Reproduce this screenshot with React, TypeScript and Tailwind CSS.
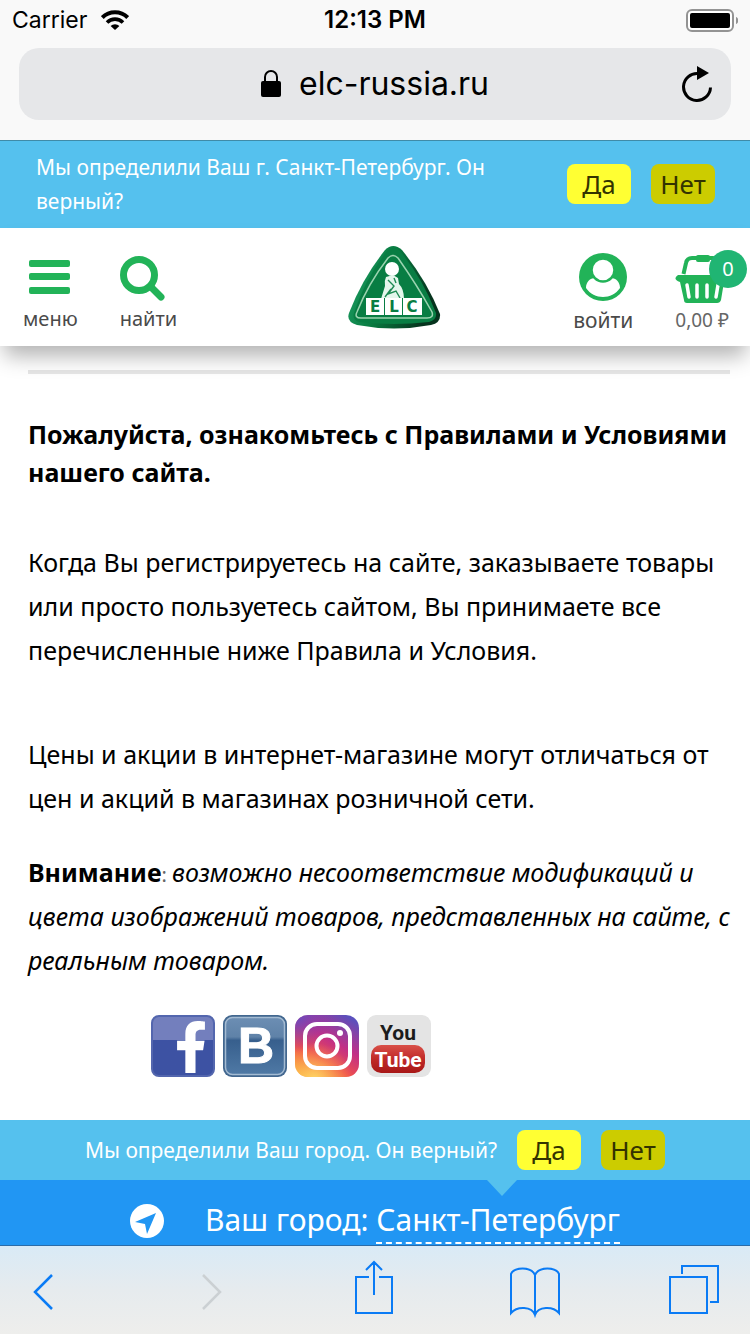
import React from "react";
import { FaFacebookF } from "react-icons/fa";

function StatusBar() {
  return (
    <div className="grid h-10 grid-cols-3 items-center pl-3 pr-3 text-black">
      <div className="flex items-center gap-3.5 text-[23px]">
        <span>Carrier</span>
        <svg width="28" height="20" viewBox="0 0 28 20" fill="none" stroke="#000" strokeWidth="4" aria-hidden="true">
          <path d="M1.3 7.6a18 18 0 0 1 25.4 0" />
          <path d="M6 12.4a11.3 11.3 0 0 1 16 0" strokeWidth="3.6" />
          <path d="M9.6 16a6.3 6.3 0 0 1 8.800 0L14 20Z" fill="#000" stroke="none" />
        </svg>
      </div>
      <div className="text-center text-[24px] font-semibold">12:13 PM</div>
      <svg className="justify-self-end" width="52" height="23" viewBox="0 0 52 23" aria-hidden="true">
        <rect x="1" y="1" width="46" height="21" rx="5" fill="#fff" stroke="#939393" strokeWidth="2" />
        <rect x="4" y="4" width="40" height="15" rx="2" fill="#000" />
        <path d="M50 8c3 1 3 6 0 7z" fill="#939393" />
      </svg>
    </div>
  );
}

function AddressBar() {
  return (
    <div className="mx-[19px] mb-5 mt-2 grid h-[72px] grid-cols-[1fr_auto_1fr] items-center rounded-[20px] bg-[#e6e7e9]">
      <div />
      <div className="flex items-center gap-[18px] text-[32px] leading-none text-black">
        <svg width="20" height="28" viewBox="0 0 20 28" aria-hidden="true">
          <rect y="11" width="20" height="16" rx="2" fill="#000" />
          <path d="M4 12V7a6 6 0 0 1 12 0v5" fill="none" stroke="#000" strokeWidth="2" />
        </svg>
        <span>elc-russia.ru</span>
      </div>
      <button type="button" aria-label="Обновить" className="mr-[18px] justify-self-end">
        <svg width="32" height="36" viewBox="0 0 32 36" aria-hidden="true">
          <path d="M29.500 21.500A13.500 13.500 0 1 1 17 7.500" fill="none" stroke="#000" strokeWidth="3" />
          <path d="M16 0v14l12-7z" fill="#000" />
        </svg>
      </button>
    </div>
  );
}

function Choices() {
  return (
    <div className="flex gap-5 text-[26px] leading-10 text-[#333300]">
      <button type="button" className="h-10 w-16 rounded-lg bg-[#ffff33]">Да</button>
      <button type="button" className="h-10 w-16 rounded-lg bg-[#cccc00]">Нет</button>
    </div>
  );
}

function Logo() {
  return (
    <svg width="94" height="84" viewBox="0 0 94 84" role="img" aria-label="ELC">
      <defs>
        <linearGradient id="edge" x1="0" y1="0" x2="1" y2="0.3">
          <stop offset="0" stopColor="#21a56a" />
          <stop offset="0.5" stopColor="#087a40" />
          <stop offset="1" stopColor="#06331d" />
        </linearGradient>
      </defs>
      <path d="M37 5Q45-3 54 5Q79 36 92 69Q93 78 83 80Q46 87 9 80Q-2 77 1 68Q14 34 37 5Z" fill="url(#edge)" />
      <path d="M39 6Q46 0 52 6Q75 34 88 68Q89 75 81 77Q46 81 11 77Q4 75 6 68Q17 34 39 6Z" fill="#087d43" />
      <path d="M40 13Q45 8 50 13Q69 40 84 67Q86 73 79 73H13Q6 73 9 67Q20 39 40 13Z" fill="none" stroke="#9bd4b0" strokeWidth="1.500" />
      <circle cx="44" cy="24" r="7" fill="#fff" />
      <path d="M38 32q-2 4-1 9l-4 13h23q0-10-5-15l-1-6-5-3z" fill="#e4f6ec" />
      <path d="m40 35 6 6-6 8 8-3 4 7M37 52l6-8M46 33l2 5" stroke="#1d8a53" strokeWidth="1.400" fill="none" />
      <path d="M18 53H74V70H18Z" fill="#fff" />
      <path d="M36.500 53V70M54.500 53V70" stroke="#087d43" strokeWidth="1" />
      <g fill="#087d43" fontFamily="DejaVu Sans, sans-serif" fontWeight="700" fontSize="15" textAnchor="middle">
        <text x="27" y="67">E</text>
        <text x="46" y="67">L</text>
        <text x="64" y="67">C</text>
      </g>
    </svg>
  );
}

function SiteHeader() {
  return (
    <header className="relative grid h-[118px] grid-cols-[53fr_auto_47fr] bg-white text-[#4a4a4a] shadow-[0_14px_20px_-4px_rgba(0,0,0,0.3)]">
      <div className="flex gap-[42px] pl-[23px] pt-7 text-xl leading-6">
        <button type="button" className="flex flex-col items-center gap-[5px]">
          <svg width="54" height="46" viewBox="0 0 54 46" fill="#22b358" aria-hidden="true">
            <rect x="6" y="4" width="41" height="7" rx="2" />
            <rect x="6" y="17" width="41" height="7" rx="2" />
            <rect x="6" y="31" width="41" height="7" rx="2" />
          </svg>
          меню
        </button>
        <button type="button" className="flex flex-col items-start gap-[5px]">
          <svg width="46" height="46" viewBox="0 0 46 46" fill="none" stroke="#22b358" aria-hidden="true">
            <circle cx="19" cy="19" r="15.500" strokeWidth="7" />
            <path d="m31 31 10 10" strokeWidth="7" strokeLinecap="round" />
          </svg>
          найти
        </button>
      </div>
      <a href="#home" className="pt-[17px]"><Logo /></a>
      <div className="flex justify-end gap-[42px] pr-[21px] pt-6">
        <button type="button" className="flex flex-col items-center gap-1.5 text-[21px] leading-6">
          <svg width="48" height="50" viewBox="0 0 48 50" aria-hidden="true">
            <circle cx="24" cy="25" r="24" fill="#22b358" />
            <path d="M7 36c0-6 4-10 9-10 5 2 11 2 16 0 5 0 9 4 9 10-8 12-26 12-34 0Z" fill="#fff" />
            <circle cx="24" cy="18" r="11.500" fill="#fff" stroke="#22b358" strokeWidth="2.500" />
          </svg>
          войти
        </button>
        <button type="button" className="relative flex flex-col items-start gap-1 text-[19px] leading-6 text-[#666]">
          <svg width="52" height="52" viewBox="0 0 52 52" aria-hidden="true">
            <path d="M8.500 22 11 11Q12 6 17 6H38Q42 6 43 11L45 22" fill="none" stroke="#22b358" strokeWidth="4" />
            <rect x="21" y="3" width="14" height="7" rx="2" fill="#22b358" />
            <path d="M3 23H49Q54 26 49 30L46 48Q45 51 42 51H12Q9 51 9 48L5 30Q-3 27 3 23Z" fill="#22b358" />
            <path d="m12 33 2 12M22 33v12M32 33v12M43 33l-2 12" stroke="#fff" strokeWidth="3.500" strokeLinecap="round" />
          </svg>
          0,00 ₽
          <span className="absolute -right-[18px] -top-0.5 flex size-[38px] items-center justify-center rounded-full bg-[#20b573] text-xl text-white">0</span>
        </button>
      </div>
    </header>
  );
}

function VkIcon() {
  return (
    <svg className="overflow-visible" width="64" height="62" viewBox="0 0 64 62" aria-hidden="true">
      <defs>
        <linearGradient id="vk" x1="0" y1="0" x2="0" y2="1">
          <stop offset="0" stopColor="#6c8eb3" />
          <stop offset="0.34" stopColor="#5f82a8" />
          <stop offset="0.4" stopColor="#375f8d" />
          <stop offset="1" stopColor="#4f79a5" />
        </linearGradient>
      </defs>
      <rect width="64" height="62" rx="9" fill="#42678f" />
      <rect x="2.500" y="2.500" width="59" height="57" rx="7" fill="url(#vk)" stroke="#a4bbd2" strokeWidth="1.500" />
      <text x="33" y="48" textAnchor="middle" fontFamily="Liberation Sans, sans-serif" fontWeight="700" fontSize="50" fill="#fff" stroke="#fff">В</text>
    </svg>
  );
}

function InstagramIcon() {
  return (
    <svg width="64" height="62" viewBox="0 0 64 62" aria-hidden="true">
      <defs>
        <linearGradient id="ig" x1="0.2" y1="1" x2="0.8" y2="0">
          <stop offset="0" stopColor="#f9a13c" />
          <stop offset="0.3" stopColor="#ef4f4d" />
          <stop offset="0.6" stopColor="#c22f86" />
          <stop offset="1" stopColor="#5a50bd" />
        </linearGradient>
        <radialGradient id="glow" cx="0.3" cy="1.05" r="0.6">
          <stop offset="0" stopColor="#ffd868" />
          <stop offset="1" stopColor="#ffb04a" stopOpacity="0" />
        </radialGradient>
        <radialGradient id="dusk" cx="0" cy="0" r="0.6">
          <stop offset="0" stopColor="#5f51c4" />
          <stop offset="1" stopColor="#8a3cae" stopOpacity="0" />
        </radialGradient>
      </defs>
      <rect width="64" height="62" rx="13" fill="url(#ig)" />
      <rect width="64" height="62" rx="13" fill="url(#glow)" />
      <rect width="64" height="62" rx="13" fill="url(#dusk)" />
      <g fill="none" stroke="#fff" strokeWidth="4">
        <rect x="10" y="9" width="45" height="44" rx="12" />
        <circle cx="32" cy="31" r="10.500" />
      </g>
      <circle cx="45" cy="18" r="3" fill="#fff" />
    </svg>
  );
}

function YoutubeIcon() {
  return (
    <svg width="64" height="62" viewBox="0 0 64 62" aria-hidden="true">
      <defs>
        <linearGradient id="yt" x1="0" y1="0" x2="0" y2="1">
          <stop offset="0" stopColor="#d95048" />
          <stop offset="0.5" stopColor="#c02a28" />
          <stop offset="1" stopColor="#a81818" />
        </linearGradient>
      </defs>
      <rect width="64" height="62" rx="9" fill="#e4e4e4" />
      <rect x="4" y="30" width="54" height="28" rx="10" fill="url(#yt)" />
      <g fontFamily="Roboto, sans-serif" fontWeight="700" fontSize="21" textAnchor="middle">
        <text x="31" y="25" fill="#1c1c1c">You</text>
        <text x="31" y="52" fill="#fff">Tube</text>
      </g>
    </svg>
  );
}

function Socials() {
  return (
    <nav className="flex gap-2 pl-[151px]">
      <a href="#facebook" aria-label="Facebook" className="flex h-[62px] w-16 items-end justify-center rounded-lg border-2 border-[#5366ae] bg-linear-to-b from-[#737fbd] from-40% to-[#3d52a3] to-40% pb-0.5 pl-4 text-[52px] text-white">
        <FaFacebookF />
      </a>
      <a href="#vk" aria-label="ВКонтакте"><VkIcon /></a>
      <a href="#instagram" aria-label="Instagram"><InstagramIcon /></a>
      <a href="#youtube" aria-label="YouTube"><YoutubeIcon /></a>
    </nav>
  );
}

function Toolbar() {
  return (
    <nav className="flex h-[89px] items-start justify-between border-t border-[#2b6ca8] bg-linear-to-b from-[#d9eaf6] via-[#e6ebee] to-[#eeeeec] pl-[33px] pr-[31px] pt-[14px]">
      <button type="button" aria-label="Назад">
        <svg width="50" height="60" viewBox="0 0 50 60" fill="none" stroke="#0a7bf5" strokeWidth="2.500" aria-hidden="true"><path d="M19 15 2 32l17 17" /></svg>
      </button>
      <button type="button" aria-label="Вперёд" disabled>
        <svg width="50" height="60" viewBox="0 0 50 60" fill="none" stroke="#cbd0d3" strokeWidth="2.500" aria-hidden="true"><path d="m11 15 17 17-17 17" /></svg>
      </button>
      <button type="button" aria-label="Поделиться">
        <svg width="50" height="60" viewBox="0 0 50 60" fill="none" stroke="#0a7bf5" strokeWidth="2" aria-hidden="true">
          <path d="M18 17H5v36h36V17H28M23 35V2M15 10l8-8 8 8" />
        </svg>
      </button>
      <button type="button" aria-label="Закладки">
        <svg width="50" height="60" viewBox="0 0 50 60" fill="none" stroke="#0a7bf5" strokeWidth="2" aria-hidden="true">
          <path d="M25 15C21 6 4 7 1 14V53C7 46 22 46 25 55C28 46 43 46 49 53V14C46 7 29 6 25 15V55" />
        </svg>
      </button>
      <button type="button" aria-label="Вкладки">
        <svg width="50" height="60" viewBox="0 0 50 60" fill="none" stroke="#0a7bf5" strokeWidth="2" aria-hidden="true">
          <path d="M1 17H38V53H1ZM13 14V6H49V42H41" />
        </svg>
      </button>
    </nav>
  );
}

export default function App() {
  return (
    <div className="flex min-h-screen flex-col bg-white font-['Noto_Sans',sans-serif]">
      <div className="border-b border-[#3f8ba8] bg-[#f9f9f9] font-['Inter',sans-serif]">
        <StatusBar />
        <AddressBar />
      </div>
      <section className="flex items-center justify-between gap-12 bg-[#55c1ee] pb-2.5 pl-9 pr-[35px] pt-[9px] text-white">
        <p className="flex-1 text-[21px] leading-[34px]">Мы определили Ваш г. Санкт-Петербург. Он верный?</p>
        <Choices />
      </section>
      <SiteHeader />
      <main className="flex-1 pb-[42px] pt-6 text-black">
        <div className="pl-7 pr-5 text-[25px] leading-[44px]">
          <hr className="border-t-4 border-[#e6e6e6]" />
          <h1 className="mt-[41px] font-bold leading-[38px]">Пожалуйста, ознакомьтесь с Правилами и Условиями нашего сайта.</h1>
          <p className="mt-[49px]">Когда Вы регистрируетесь на сайте, заказываете товары или просто пользуетесь сайтом, Вы принимаете все перечисленные ниже Правила и Условия.</p>
          <p className="mt-[60px]">Цены и акции в интернет-магазине могут отличаться от цен и акций в магазинах розничной сети.</p>
          <p className="mb-[33px] mt-[30px]"><strong>Внимание</strong><span className="text-xl text-[#666]">: </span><em>возможно несоответствие модификаций и цвета изображений товаров, представленных на сайте, с реальным товаром.</em></p>
        </div>
        <Socials />
      </main>
      <section className="flex h-[60px] items-center justify-center gap-5 bg-[#55c1ee] text-white">
        <p className="text-[21px] leading-[34px]">Мы определили Ваш город. Он верный?</p>
        <Choices />
      </section>
      <section className="relative flex h-[65px] items-center justify-center gap-[41px] bg-[#2196f3] pt-4 text-[30px] leading-[44px] text-white">
        <svg className="absolute left-[487px] top-0" width="30" height="16" viewBox="0 0 30 16" aria-hidden="true"><path d="M0 0h30L15 16Z" fill="#55c1ee" /></svg>
        <svg width="34" height="34" viewBox="0 0 34 34" aria-hidden="true">
          <circle cx="17" cy="17" r="17" fill="#fff" />
          <path d="M26 9 17 30 15 20 5 18Z" fill="#2196f3" />
        </svg>
        <p>Ваш город: <a href="#city" className="inline-block border-b-2 border-dashed border-white">Санкт-Петербург</a></p>
      </section>
      <Toolbar />
    </div>
  );
}
